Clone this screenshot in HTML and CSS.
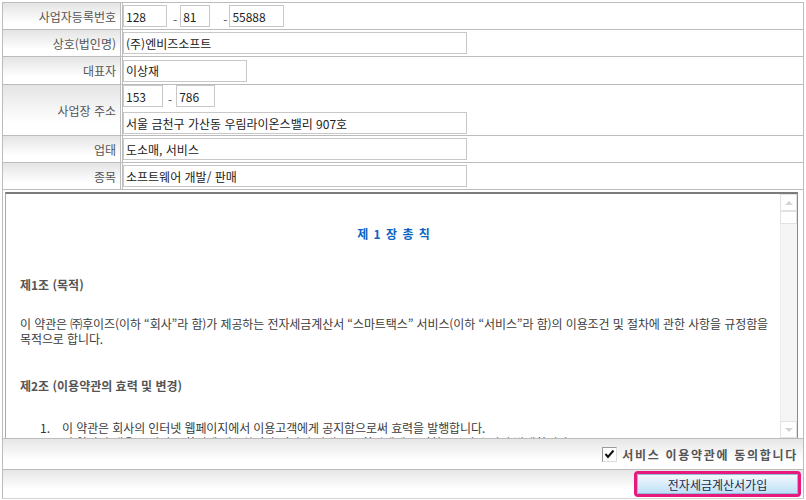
FILE: index.html
```html
<!DOCTYPE html>
<html lang="ko">
<head>
  <meta charset="UTF-8">
  <title>전자세금계산서 가입</title>
  <link rel="stylesheet" href="styles.css">
</head>
<body>

  <div class="join-form">
    <div class="row">
      <div class="label">사업자등록번호</div>
      <div class="value">
        <input class="inp w44" value="128"><span class="dash d1">-</span><input class="inp w30" value="81"><span class="dash d2">-</span><input class="inp w55" value="55888">
      </div>
    </div>
    <div class="row">
      <div class="label">상호(법인명)</div>
      <div class="value"><input class="inp w344" value="(주)엔비즈소프트"></div>
    </div>
    <div class="row row-tall">
      <div class="label">대표자</div>
      <div class="value"><input class="inp w124" value="이상재"></div>
    </div>
    <div class="row row-addr">
      <div class="label">사업장 주소</div>
      <div class="value value-col">
        <div class="zip">
          <input class="inp w40" value="153"><span class="dash d3">-</span><input class="inp w39" value="786">
        </div>
        <input class="inp w344" value="서울 금천구 가산동 우림라이온스밸리 907호">
      </div>
    </div>
    <div class="row">
      <div class="label">업태</div>
      <div class="value"><input class="inp w344" value="도소매, 서비스"></div>
    </div>
    <div class="row">
      <div class="label">종목</div>
      <div class="value"><input class="inp w344" value="소프트웨어 개발/ 판매"></div>
    </div>

    <div class="terms-row">
      <div class="terms">
        <div class="terms-body">
          <h3 class="chapter">제 1 장 총 칙</h3>
          <h4 class="article">제1조 (목적)</h4>
          <p>이 약관은 ㈜후이즈(이하 “회사”라 함)가 제공하는 전자세금계산서 “스마트택스” 서비스(이하 “서비스”라 함)의 이용조건 및 절차에 관한 사항을 규정함을 목적으로 합니다.</p>
          <h4 class="article art2">제2조 (이용약관의 효력 및 변경)</h4>
          <ol>
            <li><span class="num">1.</span>이 약관은 회사의 인터넷 웹페이지에서 이용고객에게 공지함으로써 효력을 발행합니다.</li>
            <li><span class="num">2.</span>이 약관의 내용은 서비스 화면에 게시하거나 기타의 방법으로 회원에게 공지함으로써 효력이 발생합니다.</li>
          </ol>
        </div>
        <div class="scrollbar">
          <span class="sb-btn"><span class="arrow-up"></span></span>
          <span class="sb-thumb"></span>
          <span class="sb-track"></span>
          <span class="sb-btn"><span class="arrow-down"></span></span>
        </div>
      </div>
    </div>

    <div class="agree-row">
      <span class="check">
        <svg width="11" height="11" viewBox="0 0 11 11"><path d="M1.5 5 L4 8 L9.5 1.5" fill="none" stroke="#111" stroke-width="2"/></svg>
      </span>
      <span class="agree-text">서비스 이용약관에 동의합니다</span>
    </div>

    <div class="btn-row">
      <span class="btn-frame"><button class="join-button">전자세금계산서가입</button></span>
    </div>
  </div>

</body>
</html>
```

FILE: styles.css
```css
body {
  margin: 0;
  background: #fff;
  font-family: "Noto Sans CJK KR", "Noto Sans", sans-serif;
  font-size: 12px;
}
.join-form {
  margin: 2px 0 0 2px;
  width: 802px;
  box-sizing: border-box;
  border: 1px solid #bcbcbc;
  border-bottom-color: #d4d4d4;
}
.row {
  display: flex;
  height: 26px;
  border-bottom: 1px solid #bcbcbc;
}
.row-tall {
  height: 27px;
}
.row-addr {
  height: 50px;
}
.label {
  width: 118px;
  box-sizing: border-box;
  padding-right: 4px;
  border-right: 1px solid #bcbcbc;
  background: linear-gradient(#e4e4e4, #fff 75%);
  color: #555;
  display: flex;
  align-items: center;
  justify-content: flex-end;
}
.value {
  flex: 1;
  margin-left: 1px;
  border-left: 1px solid #bcbcbc;
  display: flex;
  align-items: center;
}
.value-col {
  flex-direction: column;
  align-items: flex-start;
  justify-content: space-between;
  padding-bottom: 1px;
}
.zip {
  display: flex;
  align-items: center;
}
.inp {
  height: 22px;
  box-sizing: border-box;
  border: 1px solid #c8c8c8;
  padding: 0 2px;
  font-family: inherit;
  font-size: 12px;
  color: #222;
  background: #fff;
}
.w30 { width: 30px; }
.w39 { width: 39px; }
.w40 { width: 40px; }
.w44 { width: 44px; }
.w55 { width: 55px; }
.w124 { width: 124px; }
.w344 { width: 344px; }
.dash {
  color: #555;
  margin-top: 8px;
  line-height: 10px;
}
.d1 { margin-left: 6px; margin-right: 3px; }
.d2 { margin-left: 13px; margin-right: 2px; }
.d3 { margin-left: 5px; margin-right: 4px; }

/* 약관 영역 */
.terms-row {
  padding: 2px 5px 0 2px;
  border-bottom: 1px solid #bcbcbc;
}
.terms {
  display: flex;
  height: 246px;
  box-sizing: border-box;
  border-top: 2px solid #7c7c7c;
  border-left: 1px solid #a8a8a8;
  border-right: 1px solid #8a8a8a;
}
.terms-body {
  flex: 1;
  overflow: hidden;
  padding: 0 12px 0 14px;
  color: #3c3c3c;
  letter-spacing: -0.1px;
}
.chapter {
  margin: 32px 0 0;
  line-height: 16px;
  font-size: 12px;
  text-align: center;
  color: #0a64c4;
  letter-spacing: 1px;
}
.article {
  margin: 35px 0 0;
  line-height: 16px;
  font-size: 12px;
  color: #555;
  letter-spacing: 0;
}
.art2 {
  margin-top: 32px;
}
.terms-body p {
  margin: 23px 0 0;
  line-height: 15px;
}
.terms-body ol {
  margin: 26px 0 0;
  padding-left: 20px;
  list-style: none;
  line-height: 15px;
}
.num {
  display: inline-block;
  width: 22px;
  color: #333;
  letter-spacing: 0;
}
.scrollbar {
  width: 17px;
  display: flex;
  flex-direction: column;
  background: #f5f5f5;
}
.sb-btn {
  height: 15px;
  border: 1px solid #e2e2e2;
  background: #fff;
  display: flex;
  align-items: center;
  justify-content: center;
}
.arrow-up {
  border-left: 4px solid transparent;
  border-right: 4px solid transparent;
  border-bottom: 4px solid #d4d4d4;
}
.arrow-down {
  border-left: 4px solid transparent;
  border-right: 4px solid transparent;
  border-top: 4px solid #d4d4d4;
}
.sb-thumb {
  height: 11px;
  border: 1px solid #e2e2e2;
  background: #fff;
}
.sb-track {
  flex: 1;
  border-left: 1px solid #ececec;
}

/* 동의 / 버튼 */
.agree-row {
  height: 30px;
  display: flex;
  align-items: center;
  justify-content: flex-end;
  padding-right: 5px;
  border-bottom: 1px solid #bcbcbc;
  background: linear-gradient(#e6e6e6, #fff 70%);
}
.check {
  width: 15px;
  height: 15px;
  box-sizing: border-box;
  border: 1px solid #9a9a9a;
  border-right-color: #ddd;
  border-bottom-color: #ddd;
  background: #fff;
  display: flex;
  align-items: center;
  justify-content: center;
  margin-right: 5px;
}
.agree-text {
  font-weight: bold;
  color: #555;
  letter-spacing: 1.7px;
}
.btn-row {
  height: 28px;
  display: flex;
  align-items: center;
  justify-content: flex-end;
  padding-right: 2px;
  background: linear-gradient(#e6e6e6, #fff 70%);
}
.btn-frame {
  display: flex;
  border: 3px solid #e8197c;
  border-radius: 4px;
}
.join-button {
  width: 161px;
  height: 20px;
  border: 1px solid #8fbedd;
  background: linear-gradient(#f2f9fe, #bfe0f6);
  color: #1c2a4e;
  font-family: inherit;
  font-size: 12px;
  padding: 0;
  cursor: pointer;
}
```
